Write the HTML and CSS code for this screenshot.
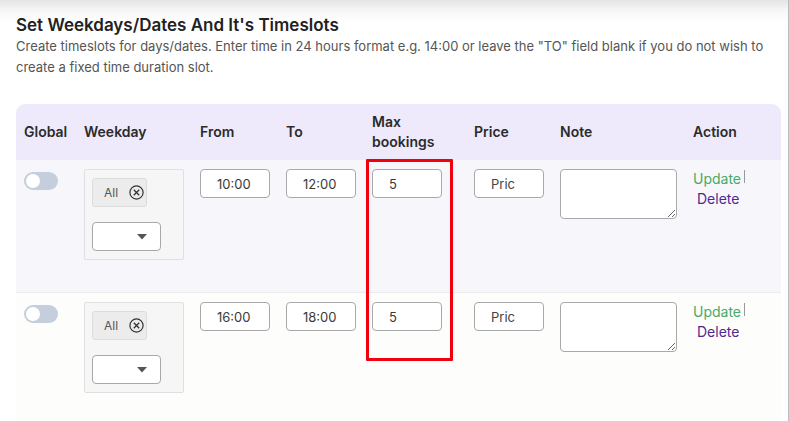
FILE: index.html
```html
<!DOCTYPE html>
<html>
<head>
<meta charset="utf-8">
<link rel="stylesheet" href="styles.css">
</head>
<body>
<div class="page">
  <h2 class="title">Set Weekdays/Dates And It's Timeslots</h2>
  <p class="desc">Create timeslots for days/dates. Enter time in 24 hours format e.g. 14:00 or leave the "TO" field blank if you do not wish to create a fixed time duration slot.</p>

  <div class="slots">
    <div class="row head">
      <div class="cell">Global</div>
      <div class="cell">Weekday</div>
      <div class="cell">From</div>
      <div class="cell">To</div>
      <div class="cell">Max<br>bookings</div>
      <div class="cell">Price</div>
      <div class="cell">Note</div>
      <div class="cell">Action</div>
    </div>

    <div class="row body odd">
      <div class="cell"><span class="toggle"><span class="knob"></span></span></div>
      <div class="cell">
        <div class="daybox">
          <span class="chip">All <svg class="x" width="15" height="15" viewBox="0 0 15 15"><circle cx="7.5" cy="7.5" r="6.6" fill="none" stroke="#333" stroke-width="1.2"/><path d="M4.8 4.8 L10.2 10.2 M10.2 4.8 L4.8 10.2" stroke="#333" stroke-width="1.3"/></svg></span>
          <span class="select"><svg width="10" height="6" viewBox="0 0 10 6"><path d="M0 0 H10 L5 5.5 Z" fill="#555"/></svg></span>
        </div>
      </div>
      <div class="cell"><input class="field" value="10:00"></div>
      <div class="cell"><input class="field" value="12:00"></div>
      <div class="cell"><input class="field" value="5"></div>
      <div class="cell"><input class="field" placeholder="Pric"></div>
      <div class="cell"><textarea class="note"></textarea></div>
      <div class="cell actions">
        <span class="update">Update</span>
        <span class="delete">Delete</span>
      </div>
    </div>

    <div class="row body even">
      <div class="cell"><span class="toggle"><span class="knob"></span></span></div>
      <div class="cell">
        <div class="daybox">
          <span class="chip">All <svg class="x" width="15" height="15" viewBox="0 0 15 15"><circle cx="7.5" cy="7.5" r="6.6" fill="none" stroke="#333" stroke-width="1.2"/><path d="M4.8 4.8 L10.2 10.2 M10.2 4.8 L4.8 10.2" stroke="#333" stroke-width="1.3"/></svg></span>
          <span class="select"><svg width="10" height="6" viewBox="0 0 10 6"><path d="M0 0 H10 L5 5.5 Z" fill="#555"/></svg></span>
        </div>
      </div>
      <div class="cell"><input class="field" value="16:00"></div>
      <div class="cell"><input class="field" value="18:00"></div>
      <div class="cell"><input class="field" value="5"></div>
      <div class="cell"><input class="field" placeholder="Pric"></div>
      <div class="cell"><textarea class="note"></textarea></div>
      <div class="cell actions">
        <span class="update">Update</span>
        <span class="delete">Delete</span>
      </div>
    </div>
  </div>

  <div class="highlight"></div>
</div>
</body>
</html>
```

FILE: styles.css
```css
* { box-sizing: border-box; }
html, body { margin: 0; padding: 0; }
body {
  font-family: Inter, "Noto Sans", "DejaVu Sans", sans-serif;
  color: #333;
  background: #fff;
}
.page {
  position: relative;
  width: 789px;
  height: 421px;
  overflow: hidden;
  padding: 13px 7px 0 16px;
  border-right: 1px solid #bdbdbd;
  background: linear-gradient(#e4e4e6 0px, #f6f6f7 10px, #fff 22px);
}
.title {
  margin: 0;
  font-size: 17px;
  line-height: 24px;
  font-weight: 600;
  color: #222;
}
.desc {
  margin: -1px 0 0;
  font-size: 13px;
  line-height: 21px;
  color: #555;
}
.slots {
  margin-top: 26px;
}
.row {
  display: grid;
  grid-template-columns: 60px 116px 86px 86px 102px 86px 133px 97px;
}
.head {
  background: #eeeafc;
  border-radius: 9px 9px 0 0;
  height: 56px;
  align-items: center;
  font-size: 14px;
  font-weight: 600;
  line-height: 20px;
  color: #2b2b2b;
}
.cell {
  padding-left: 8px;
}
.body .cell {
  padding-top: 9px;
}
.body.odd {
  background: #f7f7fb;
  height: 133px;
  border-bottom: 1px solid #ececef;
}
.body.even {
  background: #fdfdfb;
  height: 140px;
}
.toggle {
  display: block;
  margin-top: 3px;
  width: 34px;
  height: 18px;
  border-radius: 9px;
  background: #c4cedc;
  position: relative;
}
.knob {
  position: absolute;
  left: 2px;
  top: 2px;
  width: 14px;
  height: 14px;
  border-radius: 50%;
  background: #fff;
}
.daybox {
  width: 100px;
  height: 91px;
  background: #f6f6f6;
  border: 1px solid #e0e0e0;
  border-radius: 2px;
  padding: 8px 0 0 7px;
  display: flex;
  flex-direction: column;
  align-items: flex-start;
  gap: 15px;
}
.chip {
  display: flex;
  align-items: center;
  gap: 11px;
  width: 55px;
  height: 29px;
  padding-left: 11px;
  background: #ececec;
  border: 1px solid #dcdcdc;
  border-radius: 3px;
  font-size: 12px;
  color: #555;
}
.chip .x { display: block; }
.select {
  display: flex;
  align-items: center;
  justify-content: flex-end;
  width: 69px;
  height: 29px;
  padding-right: 13px;
  background: #fff;
  border: 1px solid #a8a8a8;
  border-radius: 4px;
}
.select svg { display: block; }
.field {
  display: block;
  width: 70px;
  height: 29px;
  margin: 0;
  padding: 0 0 0 16px;
  border: 1px solid #a9a9a9;
  border-radius: 4px;
  background: #fff;
  font-family: Inter, "Noto Sans", sans-serif;
  font-size: 13px;
  color: #3a3a3a;
  outline: none;
}
.field::placeholder { color: #444; opacity: 1; }
.note {
  display: block;
  width: 117px;
  height: 50px;
  margin: 0;
  border: 1px solid #a9a9a9;
  border-radius: 4px;
  background: #fff;
  font-family: Inter, sans-serif;
}
.actions {
  display: flex;
  flex-direction: column;
  align-items: flex-start;
  font-size: 14px;
  line-height: 20px;
}
.update {
  color: #48a96a;
  padding-right: 4px;
  position: relative;
}
.update::after {
  content: "";
  position: absolute;
  right: 0;
  top: 1px;
  height: 13px;
  border-right: 1px solid #999;
}
.delete {
  color: #4c2a93;
  margin-left: 4px;
}
.highlight {
  position: absolute;
  left: 366px;
  top: 159px;
  width: 87px;
  height: 202px;
  border: 3px solid #f2000d;
  border-radius: 1px;
}
```
